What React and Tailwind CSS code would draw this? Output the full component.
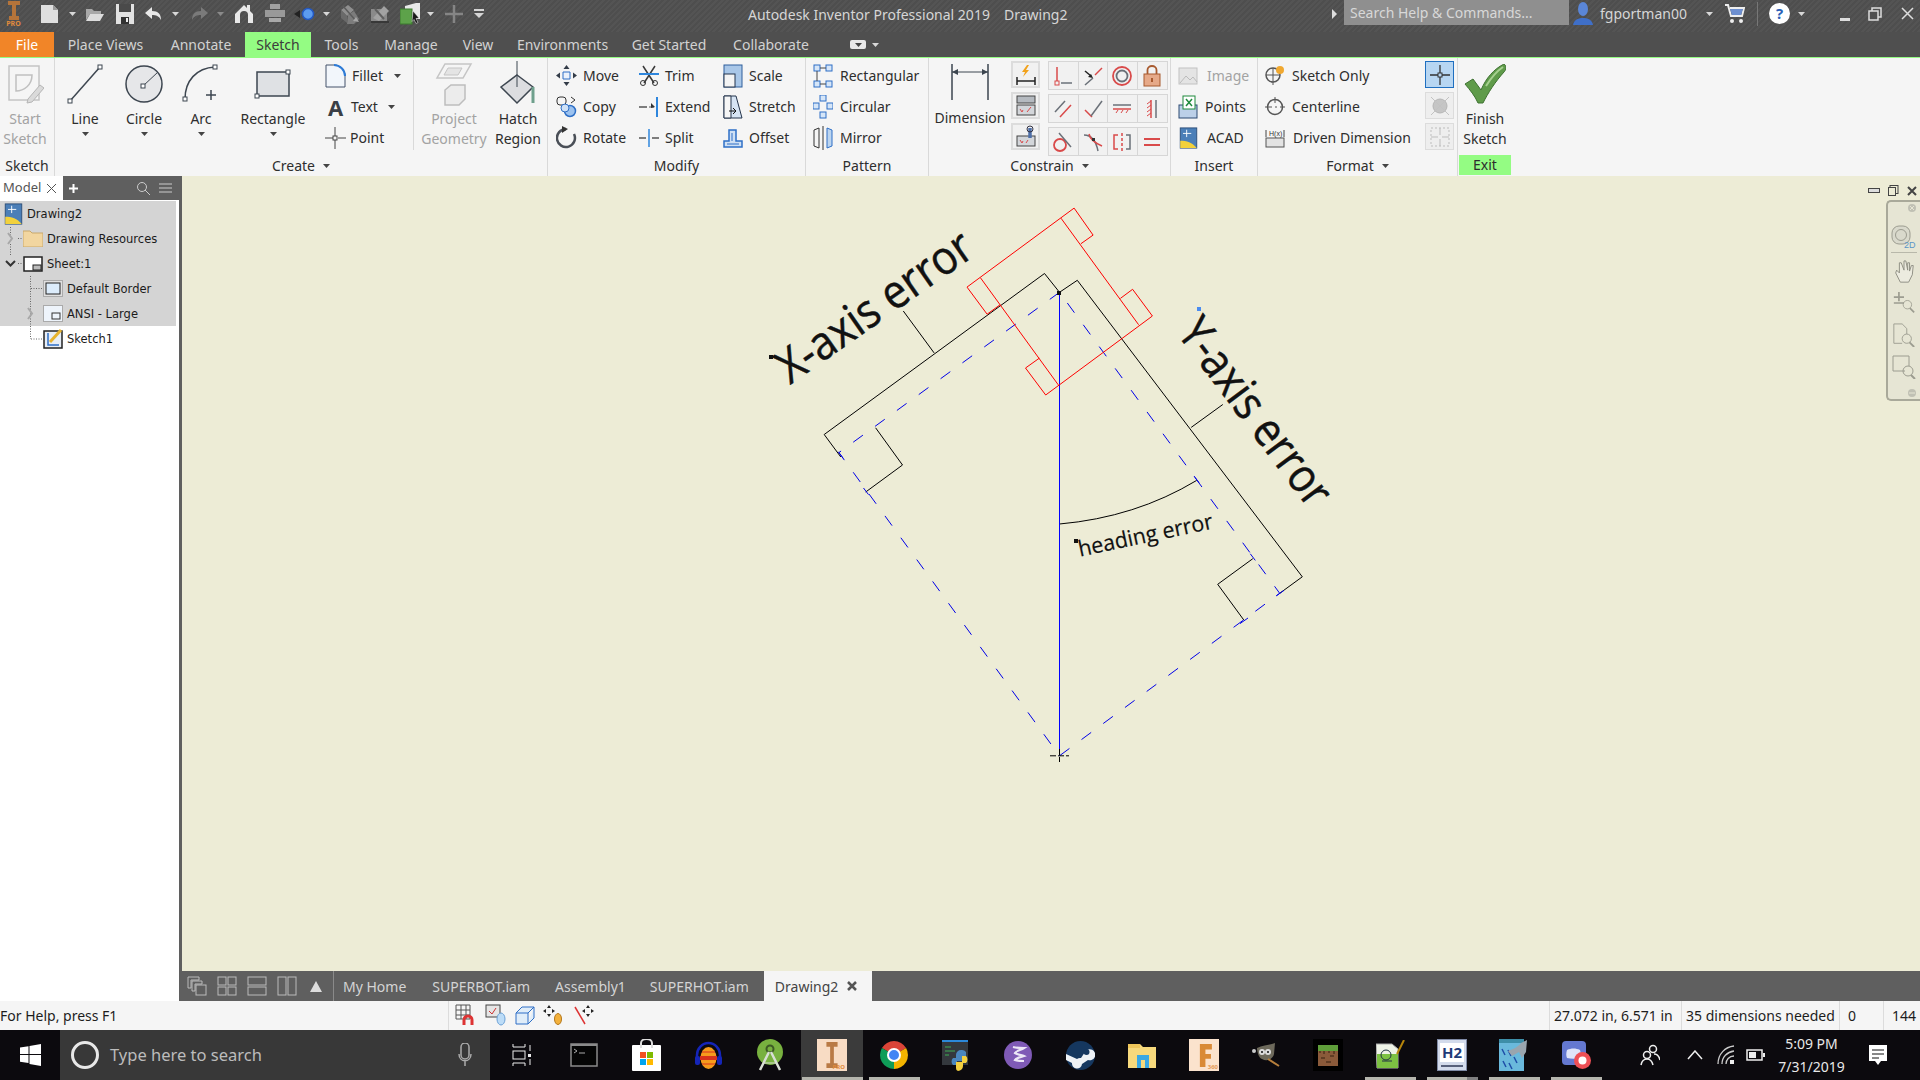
const Dd = ({ c = "#d8d8d8" }) => (
  <svg viewBox="0 0 7 4" className="w-[7px] h-[4px] shrink-0">
    <path d="M0 0h7L3.5 4z" fill={c} />
  </svg>
);

const S = ({ w, h, v, children, className = "" }) => (
  <svg viewBox={v} width={w} height={h} className={"shrink-0 " + className} fill="none">
    {children}
  </svg>
);

// ---- quick access icons
const AppIcon = () => (
  <div className="flex flex-col items-center w-[17px] leading-none">
    <S w={12} h={19} v="0 0 12 19"><path d="M0 0h12v4H8v11h3v4H1v-4h3V4H0z" fill="#b5743a" /></S>
    <span className="text-[7px] font-bold text-[#e08a3c] leading-[7px]">PRO</span>
  </div>
);
const NewDoc = () => <S w={19} h={20} v="0 0 19 20"><path d="M1 1h12l5 5v13H1z" fill="#dfdfdf" /><path d="M13 1v5h5z" fill="#9a9a9a" /></S>;
const OpenIco = () => <S w={19} h={16} v="0 0 19 16"><path d="M1 3h6l2 2h7v3H5L1 14z" fill="#a8a8a8" /><path d="M5 8h14l-4 7H1z" fill="#dcdcdc" /></S>;
const SaveIco = () => <S w={20} h={22} v="0 0 20 22"><rect x="1" y="1" width="18" height="20" fill="#e2e2e2" /><rect x="4" y="1" width="12" height="8" fill="#4a4a4a" /><rect x="6" y="14" width="8" height="7" fill="#333" /><rect x="11" y="15" width="2" height="4" fill="#eee" /></S>;
const Undo = ({ c = "#e8e8e8", flip }) => (
  <S w={18} h={14} v="0 0 18 14" className={flip ? "-scale-x-100" : ""}>
    <path d="M7 0L0 6l7 6V8c4 0 7 1 9 5 0-6-3-9-9-9z" fill={c} />
  </S>
);
const Home = () => <S w={18} h={20} v="0 0 18 20"><path d="M9 1l3 3V1h3v6l3 3v9h-5v-8a4 4 0 0 0-8 0v8H0v-9z" fill="#e8e8e8" /></S>;
const PrintIco = () => <S w={20} h={19} v="0 0 20 19"><rect x="5" y="0" width="10" height="5" fill="#a2a2a2" /><rect x="0" y="6" width="20" height="7" fill="#999" /><rect x="4" y="14" width="12" height="4" fill="#a8a8a8" /></S>;
const DotIco = () => <S w={21} h={14} v="0 0 21 14"><path d="M0 7l6-4v8z" fill="#222" /><circle cx="14" cy="7" r="5.500" fill="#5c9bf0" stroke="#2458c0" strokeWidth="1.500" /></S>;
const GrayA = () => <S w={20} h={22} v="0 0 20 22"><path d="M1 7l7-5 6 5-7 6z" fill="#8f8f8f" /><path d="M1 7v8l6 5v-7z" fill="#6a6a6a" /><path d="M8 12l6-4 5 8-5 5H7z" fill="#7c7c7c" /><path d="M3 3l14 16" stroke="#5c5c5c" strokeWidth="1.500" /><path d="M13 18l3-4 3 5z" fill="#a6a6a6" /></S>;
const GrayB = () => <S w={20} h={20} v="0 0 20 20"><rect x="1" y="5" width="16" height="13" fill="#8a8a8a" /><path d="M3 14L14 2l5 5-10 10z" fill="#a2a2a2" /><path d="M5 5l9 10" stroke="#5f5f5f" strokeWidth="2" /><path d="M1 18h18" stroke="#383838" strokeWidth="2" /></S>;
const GreenDoc = () => <S w={20} h={24} v="0 0 20 24"><path d="M5 4l11-3h4v16H5z" fill="#e9e9e9" /><rect x="0" y="7" width="12" height="15" fill="#5da24a" stroke="#3c7a2e" /><path d="M13 9l6 7-3 .5 2 4-2 1-2-4-2 2z" fill="#1a1a1a" stroke="#eee" strokeWidth=".5" /></S>;
const PlusGray = () => <S w={18} h={18} v="0 0 18 18"><path d="M9 0v18M0 9h18" stroke="#858585" strokeWidth="2.500" /></S>;
const QatMenu = () => <S w={10} h={10} v="0 0 10 10"><path d="M0 1h10" stroke="#d5d5d5" strokeWidth="2" /><path d="M0 4h10l-5 5z" fill="#d5d5d5" /></S>;
const UserIco = () => <S w={20} h={24} v="0 0 20 24"><ellipse cx="10" cy="7" rx="5" ry="7" fill="#5a86d8" /><path d="M0 23c1-6 6-7 10-7s9 1 10 7z" fill="#3f6fc8" /></S>;
const Cart = () => <S w={20} h={20} v="0 0 20 20"><path d="M0 1h3l3 11h11l2-8H5" stroke="#eee" strokeWidth="2" /><path d="M5 5h13l-2 6H7z" fill="#6d8fd0" /><circle cx="7" cy="17" r="2" fill="#eee" /><circle cx="16" cy="17" r="2" fill="#eee" /></S>;
const Help = () => (
  <div className="w-[21px] h-[21px] rounded-full bg-white flex items-center justify-center text-[15px] font-bold text-[#2a5fb8] leading-none">?</div>
);

// ---- ribbon icons
const n = "#3d4650";
const Handle = ({ x, y }) => <rect x={x - 2} y={y - 2} width="4" height="4" fill="#fff" stroke={n} />;

const StartSketch = () => (
  <S w={38} h={42} v="0 0 38 42">
    <rect x="3" y="3" width="30" height="34" stroke="#c4c4c4" strokeWidth="1.500" />
    <path d="M10 12v16c8 0 16-6 16-16z" stroke="#c0c0c0" strokeWidth="1.500" />
    <path d="M22 36l12-14 4 3-12 14-5 1z" fill="#dadada" stroke="#b5b5b5" />
  </S>
);
const LineIco = () => <S w={36} h={42} v="0 0 36 42"><path d="M3 38L33 4" stroke={n} strokeWidth="1.500" /><Handle x={3} y={38} /><Handle x={33} y={4} /></S>;
const CircleIco = () => (
  <S w={40} h={42} v="0 0 40 42">
    <circle cx="20" cy="21" r="18" fill="#e6e7e9" stroke={n} strokeWidth="1.500" />
    <path d="M19 23L34 9" stroke={n} /><Handle x={19} y={23} />
  </S>
);
const ArcIco = () => (
  <S w={38} h={42} v="0 0 38 42">
    <path d="M3 36C3 18 14 5 33 4" stroke={n} strokeWidth="1.500" /><Handle x={3} y={36} /><Handle x={33} y={4} />
    <path d="M29 27v10M24 32h10" stroke={n} strokeWidth="1.500" />
  </S>
);
const RectIco = () => (
  <S w={38} h={32} v="0 0 38 32">
    <rect x="3" y="4" width="32" height="24" fill="#dfe1e4" stroke={n} strokeWidth="1.500" /><Handle x={34} y={4} /><Handle x={3} y={28} />
  </S>
);
const ProjectIco = () => (
  <S w={38} h={44} v="0 0 38 44">
    <path d="M10 2h26l-8 14H2z" stroke="#c5c5c5" strokeWidth="1.500" /><path d="M13 6h14l-4 7H9z" fill="#e4e4e4" stroke="#c5c5c5" />
    <path d="M10 28l6-5h14v14l-6 6H10z" fill="#ececec" stroke="#bdbdbd" strokeWidth="1.500" />
  </S>
);
const HatchIco = () => (
  <S w={38} h={46} v="0 0 38 46">
    <path d="M18 14L34 26 18 42 2 26z" fill="#dcdde0" stroke={n} strokeWidth="1.500" />
    <path d="M18 0v26" stroke={n} /><path d="M34 26v16" stroke="#6fa08d" strokeWidth="3" />
  </S>
);
const Fillet = () => <S w={21} h={24} v="0 0 21 24"><path d="M1 1h8c6 0 11 5 11 11v11H1z" fill="#f2f6fb" stroke="#44536a" /><path d="M9 1c6 0 11 5 11 11" stroke="#2e7bd6" strokeWidth="2" /></S>;
const TextIco = () => <span className="w-[21px] text-center text-[22px] font-bold leading-none text-[#3a3f46]">A</span>;
const PointIco = () => <S w={21} h={22} v="0 0 21 22"><path d="M10 0v9M10 13v9M0 11h8M13 11h8" stroke="#444" /><rect x="8" y="9" width="4" height="4" stroke="#444" /></S>;
const Move = () => <S w={21} h={21} v="0 0 21 21"><path d="M10.500 0l3 4h-6zM10.500 21l3-4h-6zM0 10.500l4-3v6zM21 10.500l-4-3v6z" fill="#333c48" /><path d="M7 7h7v7H7z" fill="#eaf1fb" stroke="#2e6fc6" /></S>;
const Copy = () => <S w={21} h={23} v="0 0 21 23"><rect x="1" y="2" width="9" height="8" rx="3" stroke="#333" /><circle cx="14" cy="16" r="5.500" fill="#9cc2ef" stroke="#2e6fc6" strokeWidth="1.500" /><circle cx="9" cy="13" r="4" fill="#cfe1f7" stroke="#2e6fc6" /><path d="M15 2l4 3-4 3" stroke="#333" /></S>;
const Rotate = () => <S w={21} h={23} v="0 0 21 23"><path d="M10 3a9 9 0 1 0 8 5" stroke="#4a4f57" strokeWidth="2.500" /><path d="M6 0l6 3-6 4z" fill="#333" /></S>;
const Trim = () => <S w={20} h={21} v="0 0 20 21"><path d="M4 1l11 17M16 1L5 18" stroke="#3a3a3a" strokeWidth="1.500" /><circle cx="4" cy="18" r="2.500" stroke="#333" /><circle cx="16" cy="18" r="2.500" stroke="#333" /><path d="M0 9h20" stroke="#2e86dd" strokeWidth="2" /></S>;
const Extend = () => <S w={20} h={20} v="0 0 20 20"><path d="M0 10h8" stroke="#555" strokeWidth="1.500" /><path d="M10 10h5" stroke="#555" /><path d="M12 6l4 4-4 1z" fill="#333" /><path d="M18 0v20" stroke="#2e86dd" strokeWidth="2" /></S>;
const Split = () => <S w={20} h={20} v="0 0 20 20"><path d="M0 10h7M13 10h7" stroke="#555" strokeWidth="1.500" /><path d="M10 1v18" stroke="#2e86dd" strokeWidth="1.500" /></S>;
const Scale = () => <S w={20} h={24} v="0 0 20 24"><rect x="1" y="1" width="18" height="22" fill="#a9c7e8" stroke="#2e5f9c" /><rect x="1" y="10" width="11" height="13" fill="#f4f4f4" stroke="#25354c" /></S>;
const Stretch = () => <S w={20} h={24} v="0 0 20 24"><path d="M1 1h12l6 22H1z" fill="#d6e4f4" stroke="#25354c" /><path d="M1 1h7v22H1z" fill="#f6f6f6" stroke="#25354c" /><path d="M6 16h6M10 13l3 3-3 3" stroke="#111" /></S>;
const Offset = () => <S w={20} h={20} v="0 0 20 20"><path d="M1 19v-6h5V2h7v11h6v6z" fill="#cfe0f4" stroke="#2e6fc6" strokeWidth="1.500" /><path d="M4 16h12M9 5v8" stroke="#2e6fc6" /></S>;
const RectPat = () => <S w={20} h={24} v="0 0 20 24"><rect x="1" y="1" width="6" height="6" stroke="#2e6fc6" fill="#d6e6f8" /><rect x="13" y="1" width="6" height="6" stroke="#2e6fc6" fill="#d6e6f8" /><rect x="1" y="17" width="6" height="6" stroke="#2e6fc6" fill="#d6e6f8" /><rect x="13" y="17" width="6" height="6" stroke="#2e6fc6" fill="#d6e6f8" /><path d="M7 4h6M4 7v10M7 20h6" stroke="#444" /></S>;
const CircPat = () => <S w={20} h={24} v="0 0 20 24"><rect x="7" y="0" width="6" height="6" stroke="#2e6fc6" fill="#d6e6f8" /><rect x="0" y="8" width="6" height="6" stroke="#2e6fc6" fill="#d6e6f8" /><rect x="14" y="8" width="6" height="6" stroke="#2e6fc6" fill="#d6e6f8" /><rect x="7" y="17" width="6" height="6" stroke="#2e6fc6" fill="#d6e6f8" /></S>;
const Mirror = () => <S w={20} h={24} v="0 0 20 24"><path d="M1 4l5-2v20l-5-2z" stroke="#333" /><path d="M19 4l-5-2v20l5-2z" fill="#bcd5f0" stroke="#2e6fc6" /><path d="M10 0v24" stroke="#333" /></S>;
const DimIco = () => (
  <S w={38} h={36} v="0 0 38 36">
    <path d="M1 0v36M37 0v36" stroke={n} strokeWidth="1.500" />
    <path d="M1 8h36" stroke={n} /><path d="M1 8l6-3v6zM37 8l-6-3v6z" fill={n} />
  </S>
);

const r = "#d94a4a";
const g = "#6a7078";
const cells = [
  [<><path d="M5 2v14" stroke={r} strokeWidth="1.500" /><rect x="3" y="16" width="4" height="4" stroke={r} /><path d="M9 18h11" stroke={g} strokeWidth="1.500" /></>,
   <><path d="M3 20l8-7" stroke={g} strokeWidth="1.500" /><path d="M13 10l7-7" stroke={r} strokeWidth="1.500" /><path d="M3 6l6 5" stroke="#222" strokeWidth="1.500" /><path d="M11 13L6 12l3-3z" fill="#222" /></>,
   <><circle cx="11" cy="11" r="9" stroke={r} strokeWidth="1.800" /><circle cx="11" cy="11" r="5.500" stroke={g} strokeWidth="1.800" /></>,
   <><rect x="3" y="9" width="16" height="12" fill="#e6a988" stroke="#a85a2f" /><path d="M6.500 9V5a4.500 4 0 0 1 9 0v4" stroke="#a85a2f" strokeWidth="1.800" /><rect x="10" y="13" width="2" height="4" fill="#a85a2f" /></>],
  [<><path d="M3 14L13 3" stroke={g} strokeWidth="1.500" /><path d="M8 19L19 7" stroke={r} strokeWidth="1.500" /></>,
   <><path d="M3 12l7 7" stroke={r} strokeWidth="1.500" /><path d="M9 18L20 3" stroke={g} strokeWidth="1.500" /></>,
   <><path d="M2 7h18" stroke={g} strokeWidth="1.500" /><path d="M2 11h18" stroke={r} strokeWidth="1.500" /><path d="M5 15l2-3M10 15l2-3M15 15l2-3" stroke={r} /></>,
   <><path d="M10 2v18" stroke={r} strokeWidth="1.500" /><path d="M6 6l4-3M6 10l4-3M6 14l4-3M6 18l4-3" stroke={r} /><path d="M15 2v18" stroke={g} strokeWidth="1.500" /></>],
  [<><circle cx="8" cy="14" r="6" stroke={r} strokeWidth="1.800" /><path d="M7 2l12 14" stroke={g} strokeWidth="1.500" /></>,
   <><path d="M2 4c8 0 12 6 14 16" stroke={g} strokeWidth="1.500" /><path d="M7 3c1 5 6 9 13 12" stroke={r} strokeWidth="1.500" /><rect x="10" y="7" width="3" height="3" fill="#333" /></>,
   <><path d="M7 4H3v14h4" stroke={r} strokeWidth="1.500" /><path d="M15 4h4v14h-4" stroke={g} strokeWidth="1.500" /><path d="M11 2v18" stroke={r} strokeWidth="1.500" strokeDasharray="3 2" /></>,
   <path d="M3 8h16M3 14h16" stroke={r} strokeWidth="1.800" />],
];
const sideIcons = [
  <><path d="M3 18h18" stroke="#222" strokeWidth="1.500" /><path d="M3 14v8M21 14v8" stroke="#222" strokeWidth="1.500" /><path d="M13 2l-5 7h3l-2 5 6-7h-3l3-5z" fill="#f2a21b" /></>,
  <><rect x="3" y="2" width="18" height="7" fill="#b5bac0" stroke="#444" /><rect x="3" y="11" width="18" height="10" fill="#d3d6da" stroke="#444" /><path d="M6 15l2 3 1-2M13 18l4-5" stroke={r} /></>,
  <><rect x="3" y="11" width="18" height="10" fill="#d3d6da" stroke="#444" /><path d="M16 3v10" stroke="#4e6fa8" strokeWidth="3.500" /><circle cx="16" cy="4" r="3" stroke="#334" /><path d="M6 15l2 3 1-2M12 18l2-3" stroke={r} /></>,
];
const Cell = ({ children }) => (
  <div className="w-[29.500px] h-[27px] flex items-center justify-center">
    <svg viewBox="0 0 22 22" width="22" height="22" fill="none">{children}</svg>
  </div>
);

const ImageIco = () => <S w={20} h={20} v="0 0 20 20"><rect x="1" y="2" width="18" height="16" fill="#e4e4e4" stroke="#c2c2c2" /><path d="M2 17l6-7 4 4 3-3 4 5" stroke="#bbb" /></S>;
const PointsIco = () => <S w={20} h={24} v="0 0 20 24"><rect x="1" y="10" width="18" height="13" fill="#bcd0e8" stroke="#2d4a73" /><rect x="5" y="1" width="12" height="13" fill="#fff" stroke="#1f8a3c" /><path d="M8 4l6 7M14 4l-6 7" stroke="#1f8a3c" strokeWidth="1.500" /></S>;
const AcadIco = () => (
  <S w={19} h={22} v="0 0 20 24">
    <rect x="1" y="1" width="18" height="22" fill="#4b7fb8" stroke="#2c4e78" />
    <path d="M1 23v-8c7 0 13 2 18 8z" fill="#f2d13c" />
    <path d="M4 7h9M8 3v8" stroke="#fff" />
  </S>
);
const SketchOnly = () => <S w={20} h={22} v="0 0 20 22"><circle cx="8" cy="10" r="7" stroke="#555" strokeWidth="1.500" /><path d="M1 10h14M8 3v17" stroke="#555" /><circle cx="15" cy="5" r="4" fill="#f0a830" /></S>;
const CenterIco = () => <S w={20} h={20} v="0 0 20 20"><circle cx="10" cy="10" r="7.500" stroke="#555" strokeWidth="1.500" /><path d="M0 10h7M10 10h2M15 10h5M10 0v6" stroke="#555" /></S>;
const DrivenIco = () => <S w={20} h={20} v="0 0 20 20"><rect x="1" y="10" width="18" height="9" fill="#e3e3e3" stroke="#555" /><path d="M1 2v7M19 2v7" stroke="#444" /><text x="4" y="8" fontSize="7" fontFamily="Liberation Sans" fill="#333">H(x)</text></S>;
const PlusCross = ({ c = "#333" }) => <svg viewBox="0 0 24 24" width="24" height="24" fill="none"><path d="M12 2v8M12 14v8M2 12h8M14 12h8" stroke={c} strokeWidth="1.300" /><rect x="10" y="10" width="4" height="4" stroke={c} /></svg>;
const Check = () => <S w={42} h={40} v="0 0 42 40"><path d="M1 20l8-5 8 11C22 14 30 5 40 0c3 2 2 6 0 8C31 18 24 29 19 39h-5C11 32 6 26 1 20z" fill="#5f9b4a" stroke="#3f7232" /><path d="M22 22C27 14 33 7 39 3" stroke="#a6d08f" strokeWidth="2" /></S>;

const Tool = ({ icon, label, dd, off, iw = "w-[21px]", gap = "ml-[6px]" }) => (
  <div className={"flex items-center h-[31px] " + (off ? "text-[#a3a3a3]" : "text-[#2e2e2e]")}>
    <div className={"flex justify-center shrink-0 " + iw}>{icon}</div>
    <span className={"whitespace-nowrap " + gap}>{label}</span>
    {dd}
  </div>
);

const Big = ({ w, icon, l1, l2, arrow, off }) => (
  <div className={"flex flex-col items-center shrink-0 " + w + " " + (off ? "text-[#a3a3a3]" : "text-[#2e2e2e]")}>
    <div className="h-[51px] flex items-center justify-center">{icon}</div>
    <span className="leading-[20px] whitespace-nowrap">{l1}</span>
    {l2 && <span className="leading-[20px] whitespace-nowrap">{l2}</span>}
    {arrow && <div className="mt-[3px]"><Dd c="#444" /></div>}
  </div>
);

const PanelLabel = ({ children, arrow }) => (
  <div className="h-[21px] flex items-center justify-center gap-[8px] text-[#2e2e2e]">
    <span>{children}</span>
    {arrow && <Dd c="#444" />}
  </div>
);

const Ribbon = () => (
  <div className="h-[118px] bg-[#f5f5f5] flex text-[14px] leading-[20px]">
    <div className="w-[55px] border-r border-[#d9d9d9] flex flex-col shrink-0">
      <div className="h-[97px]"><Big w="w-[50px]" off icon={<StartSketch />} l1="Start" l2="Sketch" /></div>
      <PanelLabel>Sketch</PanelLabel>
    </div>

    <div className="w-[493px] border-r border-[#d9d9d9] flex flex-col shrink-0">
      <div className="h-[97px] flex">
        <Big w="w-[60px]" icon={<LineIco />} l1="Line" arrow />
        <Big w="w-[58px]" icon={<CircleIco />} l1="Circle" arrow />
        <Big w="w-[56px]" icon={<ArcIco />} l1="Arc" arrow />
        <Big w="w-[88px]" icon={<RectIco />} l1="Rectangle" arrow />
        <div className="pt-[2px] w-[88px] ml-[8px] shrink-0">
          <Tool icon={<Fillet />} label="Fillet" dd={<div className="ml-[11px]"><Dd c="#444" /></div>} />
          <Tool gap="ml-[5px]" icon={<TextIco />} label="Text" dd={<div className="ml-[10px]"><Dd c="#444" /></div>} />
          <Tool gap="ml-[4px]" icon={<PointIco />} label="Point" />
        </div>
        <div className="w-px h-[90px] bg-[#d9d9d9] mt-[2px] shrink-0" />
        <Big w="w-[72px] ml-[4px]" off icon={<ProjectIco />} l1="Project" l2="Geometry" />
        <Big w="w-[54px] ml-[1px]" icon={<HatchIco />} l1="Hatch" l2="Region" />
      </div>
      <PanelLabel arrow>Create</PanelLabel>
    </div>

    <div className="w-[258px] border-r border-[#d9d9d9] flex flex-col shrink-0">
      <div className="h-[97px] flex pt-[2px] pl-[8px]">
        <div className="w-[83px] shrink-0">
          <Tool icon={<Move />} label="Move" />
          <Tool icon={<Copy />} label="Copy" />
          <Tool icon={<Rotate />} label="Rotate" />
        </div>
        <div className="w-[84px] shrink-0">
          <Tool iw="w-[20px]" icon={<Trim />} label="Trim" />
          <Tool iw="w-[20px]" icon={<Extend />} label="Extend" />
          <Tool iw="w-[20px]" icon={<Split />} label="Split" />
        </div>
        <div className="shrink-0">
          <Tool iw="w-[20px]" icon={<Scale />} label="Scale" />
          <Tool iw="w-[20px]" icon={<Stretch />} label="Stretch" />
          <Tool iw="w-[20px]" icon={<Offset />} label="Offset" />
        </div>
      </div>
      <PanelLabel>Modify</PanelLabel>
    </div>

    <div className="w-[123px] border-r border-[#d9d9d9] flex flex-col shrink-0">
      <div className="h-[97px] pt-[2px] pl-[7px]">
        <Tool iw="w-[20px]" gap="ml-[7px]" icon={<RectPat />} label="Rectangular" />
        <Tool iw="w-[20px]" gap="ml-[7px]" icon={<CircPat />} label="Circular" />
        <Tool iw="w-[20px]" gap="ml-[7px]" icon={<Mirror />} label="Mirror" />
      </div>
      <PanelLabel>Pattern</PanelLabel>
    </div>

    <div className="w-[242px] border-r border-[#d9d9d9] flex flex-col shrink-0">
      <div className="h-[97px] flex">
        <div className="w-[82px] shrink-0 flex flex-col items-center pt-[6px] text-[#2e2e2e]">
          <DimIco />
          <span className="mt-[8px] leading-[20px]">Dimension</span>
        </div>
        <div className="flex flex-col gap-[4px] pt-[3px] shrink-0">
          {sideIcons.map((ic, i) => (
            <div key={i} className="border-2 border-[#dcdcdc] bg-[#f1f1f1] w-[29px] h-[27px] flex items-center justify-center">
              <svg viewBox="0 0 24 24" width="24" height="24" fill="none">{ic}</svg>
            </div>
          ))}
        </div>
        <div className="flex flex-col gap-[4px] pt-[3px] ml-[8px] shrink-0">
          {cells.map((row, i) => (
            <div key={i} className="flex border border-[#d6d6d6] bg-[#f1f1f1] divide-x divide-[#d6d6d6] w-fit">
              {row.map((c, j) => <Cell key={j}>{c}</Cell>)}
            </div>
          ))}
        </div>
      </div>
      <PanelLabel arrow>Constrain</PanelLabel>
    </div>

    <div className="w-[87px] border-r border-[#d9d9d9] flex flex-col shrink-0">
      <div className="h-[97px] pt-[2px] pl-[7px]">
        <Tool iw="w-[20px]" gap="ml-[9px]" off icon={<ImageIco />} label="Image" />
        <Tool iw="w-[20px]" gap="ml-[7px]" icon={<PointsIco />} label="Points" />
        <Tool iw="w-[20px]" gap="ml-[9px]" icon={<AcadIco />} label="ACAD" />
      </div>
      <PanelLabel>Insert</PanelLabel>
    </div>

    <div className="w-[200px] border-r border-[#d9d9d9] flex flex-col shrink-0">
      <div className="h-[97px] flex pt-[3px] pl-[7px]">
        <div className="w-[160px] shrink-0 -mt-[1px]">
          <Tool iw="w-[20px]" gap="ml-[7px]" icon={<SketchOnly />} label="Sketch Only" />
          <Tool iw="w-[20px]" gap="ml-[7px]" icon={<CenterIco />} label="Centerline" />
          <Tool iw="w-[20px]" gap="ml-[8px]" icon={<DrivenIco />} label="Driven Dimension" />
        </div>
        <div className="flex flex-col gap-[4px] shrink-0">
          <div className="w-[29px] h-[27px] border border-[#1f6fc0] bg-[#b7d6f2] flex items-center justify-center"><PlusCross /></div>
          <div className="w-[29px] h-[27px] border border-[#dcdcdc] bg-[#eeeeee] flex items-center justify-center">
            <svg viewBox="0 0 24 24" width="24" height="24" fill="none"><circle cx="12" cy="12" r="7" fill="#c5c5c5" stroke="#b5b5b5" /><path d="M3 3l18 18M21 3L3 21" stroke="#c2c2c2" /></svg>
          </div>
          <div className="w-[29px] h-[27px] border border-[#dcdcdc] bg-[#eeeeee] flex items-center justify-center">
            <svg viewBox="0 0 24 24" width="24" height="24" fill="none"><rect x="3" y="3" width="18" height="18" stroke="#bdbdbd" strokeDasharray="2 2" /><path d="M12 3v7M12 14v7M3 12h7M14 12h7" stroke="#bdbdbd" /></svg>
          </div>
        </div>
      </div>
      <PanelLabel arrow>Format</PanelLabel>
    </div>

    <div className="w-[54px] flex flex-col shrink-0">
      <div className="h-[97px]"><Big w="w-[54px]" icon={<Check />} l1="Finish" l2="Sketch" /></div>
      <div className="h-[20px] w-[52px] ml-[1px] bg-[#94fc83] flex items-center justify-center text-[#2e2e2e]">Exit</div>
    </div>
  </div>
);

const tabs = [
  ["Place Views", "w-[103px]"], ["Annotate", "w-[88px]"], ["Sketch", "w-[66px]"], ["Tools", "w-[61px]"], ["Manage", "w-[78px]"],
  ["View", "w-[56px]"], ["Environments", "w-[113px]"], ["Get Started", "w-[100px]"], ["Collaborate", "w-[104px]"],
];

const TreeRow = ({ pad, icon, label }) => (
  <div className={"h-[25px] flex items-center " + pad}>
    <div className="w-[20px] h-[20px] flex items-center justify-center shrink-0">{icon}</div>
    <span className="ml-[4px] mt-[2px] whitespace-nowrap">{label}</span>
  </div>
);

const Browser = () => (
  <div className="w-[179px] shrink-0 flex flex-col bg-white">
    <div className="h-[24px] flex bg-[#5f5f5f] text-[13px] text-[#555]">
      <div className="w-[63px] bg-white flex items-center pl-[3px] gap-[6px]">
        <span>Model</span>
        <S w={9} h={9} v="0 0 9 9"><path d="M0 0l9 9M9 0L0 9" stroke="#555" /></S>
      </div>
      <div className="flex-1 flex items-center text-white">
        <S w={9} h={9} v="0 0 9 9" className="ml-[6px]"><path d="M4.500 0v9M0 4.500h9" stroke="#fff" strokeWidth="2" /></S>
        <S w={14} h={14} v="0 0 14 14" className="ml-[58px]"><circle cx="6" cy="6" r="4.500" stroke="#ccc" /><path d="M9 9l5 5" stroke="#ccc" /></S>
        <S w={13} h={10} v="0 0 13 10" className="ml-[9px]"><path d="M0 1h13M0 5h13M0 9h13" stroke="#ccc" /></S>
      </div>
    </div>
    <div className="relative flex-1 pt-[1px] text-[11.500px] text-[#1b1b1b] font-['DejaVu_Sans',sans-serif]">
      <div className="w-[176px] bg-[#d4d4d4]">
        <TreeRow pad="pl-[3px]" icon={<AcadIco />} label="Drawing2" />
        <TreeRow pad="pl-[23px]" icon={<S w={20} h={17} v="0 0 20 17"><path d="M0 1h7l2 2h11v14H0z" fill="#f2d6a0" stroke="#c9a86a" /></S>} label="Drawing Resources" />
        <TreeRow pad="pl-[23px]" icon={<S w={20} h={16} v="0 0 20 16"><rect x="1" y="1" width="18" height="14" fill="#fff" stroke="#222" strokeWidth="1.500" /><rect x="10" y="9" width="8" height="5" fill="#bbb" stroke="#222" /></S>} label="Sheet:1" />
        <TreeRow pad="pl-[43px]" icon={<S w={20} h={17} v="0 0 20 17"><rect x="0.500" y="0.500" width="19" height="16" fill="#e0e0e0" stroke="#aaa" /><rect x="3" y="3" width="14" height="11" fill="#dcecfb" stroke="#222" /></S>} label="Default Border" />
        <TreeRow pad="pl-[43px]" icon={<S w={20} h={17} v="0 0 20 17"><rect x="0.500" y="0.500" width="19" height="16" fill="#eef4fb" stroke="#aaa" /><rect x="9" y="8" width="8" height="6" stroke="#333" /></S>} label="ANSI - Large" />
      </div>
      <TreeRow pad="pl-[43px]" icon={<S w={20} h={20} v="0 0 20 20"><rect x="1" y="2" width="18" height="17" fill="#e8eef6" stroke="#222" strokeWidth="1.500" /><path d="M5 4v12h11" stroke="#2e6fc6" strokeWidth="1.500" /><path d="M7 13L18 1" stroke="#e7b32e" strokeWidth="3" /></S>} label="Sketch1" />
      {/* dotted tree connectors and expanders */}
      <svg className="absolute left-0 top-0 pointer-events-none" width="60" height="180" fill="none">
        <path d="M10.500 27v8M10.500 44v12M30.500 76v63M31 88.500h12M31 139h12M18 38.500h4M18 63.500h4" stroke="#666" strokeDasharray="1 1.500" />
        <path d="M8 33l4 5.500-4 5.500" stroke="#a8a8a8" strokeWidth="2" />
        <path d="M6 61l4.500 4.500 4.500-4.500" stroke="#333" strokeWidth="2" />
        <path d="M28 108l4 5.500-4 5.500" stroke="#a8a8a8" strokeWidth="2" />
      </svg>
    </div>
  </div>
);

const Canvas = () => (
  <div className="relative flex-1 bg-[#edecd6] overflow-hidden">
    <svg className="absolute inset-0" width="1738" height="795" viewBox="182 176 1738 795" fill="none">
      <g stroke="#000" strokeWidth="1">
        <path d="M1059.500 292.300L1044.500 273.500L824.200 434.500L840.800 457" />
        <path d="M875.600 427.800L902.500 465L865.700 492" />
        <path d="M1059.500 292.300L1077.300 280.300L1302.300 576.800L1279.700 593.300" />
        <path d="M1252.800 558.700L1217.700 584.300L1243.800 620" />
        <path d="M1059.500 524Q1135.400 517.300 1196.700 480.400" />
        <path d="M903.300 311L934.100 352.900M1191.200 427.400L1222.800 404.500" />
      </g>
      <path d="M1059.500 292.300L838.900 452.600L1059.500 755.800L1279.700 593.300Z" stroke="#0000e8" strokeDasharray="12 15" />
      <path d="M838.300 451.800l5 6.600M863.500 488l5 6.600M1194 476l5 6.600M1250.300 553.800l5 6.600M1240 623.600l8-5.600M1276 596l8-5.600" stroke="#0000e8" />
      <path d="M1059.500 292.300V755.800" stroke="#0000ff" strokeWidth="1" />
      <path d="M1059.500 749v13M1050 755.800h19" stroke="#000" strokeDasharray="6 2" />
      <g stroke="#f00" strokeWidth="1">
        <path d="M967 287.100L1074.100 208.100L1093.100 235.100L1080.800 243.800" />
        <path d="M1061 218.200L1138.600 324.700" />
        <path d="M1120.400 298.400L1132.600 289.300L1152.400 316L1045.700 395L1025.500 368L1039.300 358.200" />
        <path d="M980.400 277.700L1058.300 384.900" />
        <path d="M967 287.100L987.100 314.200L1000.200 304.700" />
      </g>
      <g fontFamily="'Open Sans', sans-serif" fill="#111" stroke="#111" strokeWidth="0.500">
        <text transform="translate(790 385) rotate(-35)" fontSize="47" textLength="228" lengthAdjust="spacingAndGlyphs">X-axis error</text>
        <text transform="translate(1176 333) rotate(53)" fontSize="47" textLength="222" lengthAdjust="spacingAndGlyphs">Y-axis error</text>
        <text transform="translate(1080 556.800) rotate(-12)" fontSize="22" textLength="137" lengthAdjust="spacingAndGlyphs" strokeWidth="0.200">heading error</text>
      </g>
      <rect x="769" y="355" width="4" height="4" fill="#111" />
      <rect x="1074" y="539" width="4" height="4" fill="#111" />
      <rect x="1197" y="307" width="4" height="4" fill="#4a8cf0" />
      <rect x="1057" y="291" width="4" height="4" fill="#111" />
    </svg>

    {/* document window controls */}
    <div className="absolute right-[3px] top-[9px] flex items-center gap-[8px]">
      <S w={12} h={5} v="0 0 12 5"><rect x="0.500" y="0.500" width="11" height="4" fill="#ddd" stroke="#444" /></S>
      <S w={11} h={11} v="0 0 11 11"><rect x="2" y="0.500" width="8" height="8" stroke="#444" /><rect x="0.500" y="2.500" width="7" height="8" fill="#edecd6" stroke="#444" /></S>
      <S w={10} h={10} v="0 0 10 10"><path d="M1 1l8 8M9 1l-8 8" stroke="#444" strokeWidth="2" /></S>
    </div>

    {/* navigation bar */}
    <div className="absolute right-0 top-[24px] w-[34px] h-[201px] bg-[#e6e5d4] border-2 border-r-0 border-[#a9a99a] rounded-l-[5px] flex flex-col items-center">
      <S w={8} h={8} v="0 0 8 8" className="mt-[2px] ml-[16px]"><circle cx="4" cy="4" r="4" fill="#c0c0b4" /><path d="M2 2l4 4M6 2L2 6" stroke="#e6e5d4" /></S>
      <S w={26} h={24} v="0 0 26 24" className="mt-[13px]">
        <rect x="1" y="1" width="18" height="18" rx="7" fill="#d9d9cc" stroke="#9c9c90" /><circle cx="10" cy="10" r="5.500" stroke="#9c9c90" />
        <text x="13" y="23" fontSize="9" fontFamily="Liberation Sans" fill="#5b95c8">2D</text>
      </S>
      <div className="w-[26px] h-px bg-[#b8b8aa] mt-[3px] shrink-0" />
      <S w={24} h={24} v="0 0 24 26" className="mt-[7px]"><path d="M3 14l5 10h9l4-8 1-10-2 0-2 6V3h-2v8L14 1h-2v10L9 3H7v11L4 11z" fill="#ecebdf" stroke="#8b8b80" /></S>
      <S w={24} h={22} v="0 0 24 26" className="mt-[8px]"><path d="M6 0v11M0 6h12M0 13h12" stroke="#9c9c90" strokeWidth="2" /><circle cx="16" cy="15" r="5" stroke="#9c9c90" /><path d="M19 19l5 5" stroke="#9c9c90" strokeWidth="2" /></S>
      <S w={24} h={24} v="0 0 24 26" className="mt-[9px]"><path d="M1 1h9l5 5v6M1 1v21h9" stroke="#9c9c90" /><circle cx="15" cy="17" r="5" stroke="#9c9c90" /><path d="M18 21l5 5" stroke="#9c9c90" strokeWidth="2" /></S>
      <S w={24} h={24} v="0 0 24 24" className="mt-[8px]"><path d="M13 16H1V1h16v10" stroke="#9c9c90" /><circle cx="16" cy="16" r="5" stroke="#9c9c90" /><path d="M19 20l4 4" stroke="#9c9c90" strokeWidth="2" /></S>
      <S w={8} h={8} v="0 0 8 8" className="mt-[10px] ml-[16px]"><circle cx="4" cy="4" r="4" fill="#c0c0b4" /><path d="M1 4h6" stroke="#e6e5d4" /></S>
    </div>
  </div>
);

const DocBar = () => (
  <div className="h-[30px] bg-[#5f5f5f] flex items-center text-[14px] text-[#d4d4d4] shrink-0">
    <S w={20} h={20} v="0 0 20 20" className="ml-[5px]"><path d="M1 1h11v3H4v8H1zM5 5h10v3H8v7H5z" stroke="#bbb" /><rect x="9" y="9" width="10" height="10" stroke="#bbb" /></S>
    <S w={20} h={20} v="0 0 20 20" className="ml-[10px]"><rect x="1" y="1" width="8" height="8" stroke="#bbb" /><rect x="11" y="1" width="8" height="8" stroke="#bbb" /><rect x="1" y="11" width="8" height="8" stroke="#bbb" /><rect x="11" y="11" width="8" height="8" stroke="#bbb" /></S>
    <S w={20} h={20} v="0 0 20 20" className="ml-[10px]"><rect x="1" y="1" width="18" height="8" stroke="#bbb" /><rect x="1" y="11" width="18" height="8" stroke="#bbb" /></S>
    <S w={20} h={20} v="0 0 20 20" className="ml-[10px]"><rect x="1" y="1" width="8" height="18" stroke="#bbb" /><rect x="11" y="1" width="8" height="18" stroke="#bbb" /></S>
    <S w={12} h={11} v="0 0 12 11" className="ml-[13px]"><path d="M6 0l6 11H0z" fill="#ddd" /></S>
    <div className="w-px h-[30px] bg-[#8a8a8a] ml-[11px]" />
    <span className="ml-[9px]">My Home</span>
    <span className="ml-[26px]">SUPERBOT.iam</span>
    <span className="ml-[25px]">Assembly1</span>
    <span className="ml-[24px]">SUPERHOT.iam</span>
    <div className="ml-[15px] h-[30px] bg-[#f5f5f5] text-[#444] flex items-center pl-[11px] gap-[9px] w-[108px]">
      <span>Drawing2</span>
      <S w={10} h={10} v="0 0 10 10"><path d="M1 1l8 8M9 1l-8 8" stroke="#555" strokeWidth="2.500" /></S>
    </div>
  </div>
);

const StatusBar = () => (
  <div className="h-[29px] bg-[#f5f5f5] flex items-stretch text-[14px] text-[#1d1d1d] shrink-0">
    <div className="w-[448px] flex items-center">For Help, press F1</div>
    <div className="flex-1 border-l border-[#dcdcdc] flex items-center pl-[6px] gap-[8px] pb-[2px]">
      <S w={22} h={22} v="0 0 22 22"><path d="M1 1h14v14H1zM1 6h14M1 11h14M6 1v14M11 1v14" stroke="#555" /><path d="M9 21v-5a4 4 0 0 1 8 0v5" stroke="#d33" strokeWidth="3" /></S>
      <S w={22} h={22} v="0 0 22 22"><rect x="1" y="1" width="14" height="12" fill="#e5e5e5" stroke="#444" /><path d="M4 7l3 3 4-6" stroke="#c33" /><ellipse cx="16" cy="15" rx="4" ry="6" fill="#bcdcf7" stroke="#6aa0d6" /></S>
      <S w={20} h={22} v="0 0 20 22"><path d="M1 9l6-6h12L13 9zM1 9v11h12V9M13 20l6-6V3" fill="#e0edf9" stroke="#2e6fc6" /></S>
      <S w={22} h={22} v="0 0 22 22"><path d="M6 1l2 3H4zM6 13l2-3H4zM0 7l3-2v4zM12 7L9 5v4z" fill="#222" /><ellipse cx="15" cy="15" rx="3.500" ry="5.500" fill="#f3b13c" stroke="#b4781c" /></S>
      <S w={24} h={22} v="0 0 24 22"><path d="M2 3l10 17" stroke="#d33" strokeWidth="1.500" /><path d="M15 1l2 3h-4zM15 13l2-3h-4zM9 7l3-2v4zM21 7l-3-2v4z" fill="#222" /></S>
    </div>
    <div className="w-[132px] border-l border-[#dcdcdc] flex items-center pl-[4px] whitespace-nowrap">27.072 in, 6.571 in</div>
    <div className="w-[158px] border-l border-[#dcdcdc] flex items-center pl-[4px] whitespace-nowrap">35 dimensions needed</div>
    <div className="w-[44px] border-l border-[#dcdcdc] flex items-center pl-[8px]">0</div>
    <div className="w-[37px] border-l border-[#dcdcdc] flex items-center pl-[8px]">144</div>
  </div>
);

const taskIcons = [
  <S w={20} h={22} v="0 0 20 22"><path d="M1 0v3h12V0M1 22v-3h12v3" stroke="#eee" /><rect x="1" y="7" width="12" height="8" stroke="#eee" /><path d="M18 1v6M18 15v6" stroke="#eee" /><rect x="16" y="10" width="3" height="3" fill="#eee" /></S>,
  <S w={28} h={24} v="0 0 28 24"><rect x="1" y="1" width="26" height="22" fill="#050505" stroke="#8a8a8a" strokeWidth="1.500" /><rect x="1" y="1" width="26" height="2" fill="#8a8a8a" /><path d="M4 6l3 2-3 2M9 10h6" stroke="#aaa" /></S>,
  <S w={29} h={32} v="0 0 29 32"><rect x="0" y="6" width="29" height="26" rx="1" fill="#fff" /><path d="M9 9V4a5.500 4 0 0 1 11 0v5" stroke="#ddd" strokeWidth="2" /><rect x="8" y="13" width="6" height="6" fill="#f25022" /><rect x="15" y="13" width="6" height="6" fill="#7fba00" /><rect x="8" y="20" width="6" height="6" fill="#00a4ef" /><rect x="15" y="20" width="6" height="6" fill="#ffb900" /></S>,
  <S w={27} h={28} v="0 0 27 28"><path d="M2 20V14a11.500 12 0 0 1 23 0v6" stroke="#1525b8" strokeWidth="2.500" /><rect x="0" y="15" width="5" height="9" rx="2" fill="#1525b8" /><rect x="22" y="15" width="5" height="9" rx="2" fill="#1525b8" /><ellipse cx="13.500" cy="17" rx="8" ry="11" fill="#f59b1c" /><path d="M5 17h17" stroke="#d8321c" strokeWidth="4" /><path d="M7 11h13M7 23h13" stroke="#e2551c" strokeWidth="1.500" /></S>,
  <S w={26} h={32} v="0 0 26 32"><circle cx="13" cy="13" r="13" fill="#78b13f" /><circle cx="13" cy="10" r="3.500" stroke="#3d5a25" strokeWidth="2" /><path d="M12 13L3 31M14 13l9 18" stroke="#d8dfd4" strokeWidth="2.500" /><path d="M6 24h14" stroke="#d8dfd4" /></S>,
  <div className="w-[30px] h-[32px] bg-[#f8dcc4] flex flex-col items-center justify-center relative">
    <S w={14} h={26} v="0 0 14 28"><path d="M1 0h12v5H9v18h4v5H1v-5h4V5H1z" fill="#b97a45" /></S>
    <span className="absolute right-[2px] bottom-[1px] text-[6px] font-bold leading-none text-[#e08a3c]">PRO</span>
  </div>,
  <S w={28} h={28} v="0 0 28 28"><path d="M14 14L1.900 7A14 14 0 0 1 26.100 7z" fill="#db4437" /><path d="M14 14L14 28A14 14 0 0 1 1.900 7z" fill="#0f9d58" /><path d="M14 14L26.100 7A14 14 0 0 1 14 28z" fill="#f4b400" /><circle cx="14" cy="14" r="6" fill="#4285f4" stroke="#fff" strokeWidth="2" /></S>,
  <S w={29} h={31} v="0 0 29 31"><rect x="0" y="0" width="26" height="25" fill="#34383d" /><rect x="0" y="0" width="26" height="2" fill="#2c88d9" /><path d="M3 7h6M3 11h10M3 15h4" stroke="#3fae55" /><path d="M19 10a5 5 0 0 0-5 5v3h-3a5 5 0 0 0 0 7h8v-3h-4v-1h6a3 3 0 0 0 3-3v-6a5 5 0 0 0-5-2z" fill="#4a86bd" /><path d="M16 31a5 5 0 0 0 5-5v-3h3a5 5 0 0 0 0-7h-4v6h-6v6a3 3 0 0 0 2 3z" fill="#f4d03f" /></S>,
  <S w={28} h={28} v="0 0 28 28"><circle cx="14" cy="14" r="14" fill="#7f5ab6" /><path d="M9 6c4 1 8 1 11 1-3 2-8 3-9 5 3 2 7 2 9 3-3 1-8 2-9 4 3 1 6 1 9 1" stroke="#ece6f6" strokeWidth="2.200" /></S>,
  <S w={29} h={29} v="0 0 29 29"><circle cx="14.500" cy="14.500" r="14.500" fill="#15375f" /><path d="M0 13l11 5a5 5 0 0 1 4-1l4-6a5.500 5.500 0 1 1 3 8l-6 4a5 5 0 0 1-10-1l-6-3z" fill="#eef2f6" /><circle cx="20.500" cy="11" r="3" fill="#15375f" /></S>,
  <S w={28} h={25} v="0 0 28 25"><path d="M0 1h12l3 3h13v21H0z" fill="#f7d97c" /><rect x="0" y="1" width="12" height="4" fill="#efc65a" /><path d="M9 25V12h12v13h-4v-8h-4v8z" fill="#3aa8e4" /></S>,
  <div className="w-[30px] h-[32px] bg-[#fbe3cd] flex items-center justify-center relative">
    <S w={15} h={24} v="0 0 16 26"><path d="M3 1h13v6H9v5h6v5H9v9H3z" fill="#d98a36" /></S>
    <span className="absolute right-[1px] bottom-[1px] text-[6px] font-bold leading-none text-[#e59a58]">360</span>
  </div>,
  <S w={28} h={24} v="0 0 28 24"><path d="M5 5c6-3 14-3 18-5l-1 11c-1 5-7 8-12 5C7 15 5 9 5 5z" fill="#6e6a5c" /><circle cx="10" cy="9" r="3" fill="#ddd" /><circle cx="16" cy="9" r="3" fill="#ddd" /><circle cx="10" cy="9" r="1" fill="#111" /><circle cx="16" cy="9" r="1" fill="#111" /><circle cx="2" cy="8" r="2" fill="#ccc" /><path d="M16 16l11 7" stroke="#b77f3c" strokeWidth="2" /></S>,
  <div className="w-[30px] h-[32px] bg-black flex items-center justify-center">
    <S w={20} h={21} v="0 0 20 21"><rect width="20" height="21" fill="#8a5a3a" /><rect width="20" height="6" fill="#5f9e3a" /><path d="M2 6v2M6 6v3M11 6v2M16 6v3M3 13h4M12 11h4M8 17h5" stroke="#5f3c24" strokeWidth="2" /></S>
  </div>,
  <S w={29} h={31} v="0 0 29 31"><path d="M0 4h16l6 5v19H1z" fill="#eef2e6" stroke="#aaa" /><path d="M1 14h21v14H1z" fill="#7cc142" /><circle cx="10" cy="15" r="5" stroke="#234" /><path d="M6 21h10" stroke="#234" /><path d="M21 14L28 0" stroke="#b8860b" strokeWidth="2" /></S>,
  <div className="w-[30px] h-[32px] bg-[#d3dbeb] border border-[#7f8aa5] flex flex-col items-center pt-[3px]">
    <div className="w-[24px] h-[19px] bg-white flex items-center justify-center text-[#1f3c78] text-[15px] font-bold leading-none">H2</div>
    <div className="w-[22px] h-[2px] mt-[3px] bg-[#57607a]" />
  </div>,
  <S w={30} h={32} v="0 0 30 32"><rect width="25" height="32" fill="#6ab9dc" /><rect width="25" height="4" fill="#3d8ea8" /><path d="M3 10l3 6M9 11l3 6M15 18l3 6M4 22l3 6M10 24l3 6" stroke="#1f4fa8" strokeWidth="1.500" /><path d="M9 12c6-2 11-5 13-8l6-3-1 12-4 6-3-6-7 4z" fill="#9aa5ae" /></S>,
  <S w={29} h={28} v="0 0 29 28"><rect x="0" y="0" width="24" height="24" rx="4" fill="#6478d0" /><path d="M5 9c4-2 9-2 13 0 1 3 1 6 0 8-4 1-9 1-13 0-1-2-1-5 0-8z" fill="#dfe4f8" /><circle cx="20.500" cy="19.500" r="8.500" fill="#ee4f55" /><circle cx="20.500" cy="19.500" r="4" fill="#fff" /></S>,
];

const Taskbar = () => (
  <div className="h-[50px] bg-[#0c0a0e] flex items-center shrink-0 relative">
    <div className="w-[60px] flex justify-center shrink-0">
      <S w={21} h={22} v="0 0 21 22"><path d="M0 3.500l8.500-1.300V10H0zM9.500 2l11.500-2v10H9.500zM0 11h8.500v8L0 17.800zM9.500 11H21v11l-11.500-2z" fill="#fff" /></S>
    </div>
    <div className="w-[430px] h-full bg-[#383838] flex items-center shrink-0 text-[#bcbcbc] text-[16.500px]">
      <div className="w-[28px] h-[28px] rounded-full border-[3px] border-[#e8e8e8] ml-[11px]" />
      <span className="ml-[11px] leading-none whitespace-nowrap">Type here to search</span>
      <S w={14} h={24} v="0 0 14 24" className="ml-[196px]"><rect x="3" y="0" width="8" height="16" rx="4" stroke="#aaa" strokeWidth="1.500" /><path d="M1 11c0 9 12 9 12 0M7 18v5" stroke="#aaa" strokeWidth="1.500" /></S>
    </div>
    <div className="flex h-full items-center shrink-0 ml-[1px]">
      {taskIcons.map((ic, i) => (
        <div key={i} className={"w-[62px] h-full flex items-center justify-center " + (i === 5 ? "bg-[#3b3b3b]" : "")}>{ic}</div>
      ))}
    </div>
    <div className="flex items-center text-white ml-[33px]">
      <S w={20} h={22} v="0 0 20 22"><circle cx="13" cy="5" r="3.500" stroke="#eee" strokeWidth="1.500" /><circle cx="7" cy="11" r="3.500" stroke="#eee" strokeWidth="1.500" /><path d="M1 21c1-5 3-6 6-6s5 2 6 6M14 10c3 0 5 2 6 6" stroke="#eee" strokeWidth="1.500" /></S>
      <S w={16} h={10} v="0 0 16 10" className="ml-[27px]"><path d="M1 9l7-8 7 8" stroke="#eee" strokeWidth="1.500" /></S>
      <S w={18} h={20} v="0 0 18 20" className="ml-[14px]"><path d="M1 19C1 9 8 2 17 1M5 19c0-7 5-12 12-13M9 19c0-4 3-8 8-8" stroke="#ccc" strokeWidth="1.300" /><rect x="13" y="15" width="4" height="4" fill="#eee" /></S>
      <S w={19} h={12} v="0 0 19 12" className="ml-[11px]"><rect x="1" y="1" width="15" height="10" stroke="#eee" strokeWidth="1.500" /><rect x="3" y="3" width="7" height="6" fill="#eee" /><rect x="17" y="4" width="2" height="4" fill="#eee" /></S>
      <div className="w-[75px] ml-[9px] text-center text-[14px] leading-[23px] text-[#e8e8e8] whitespace-nowrap">
        <div>5:09 PM</div>
        <div>7/31/2019</div>
      </div>
      <S w={20} h={22} v="0 0 20 22" className="ml-[19px]"><path d="M1 1h18v16h-6l-3 4-3-4H1z" fill="#fff" /><path d="M4 6h12M4 10h12M4 14h7" stroke="#111" /></S>
    </div>
    {/* running app underlines */}
    <div className="absolute left-[802px] bottom-0 w-[61px] h-[3px] bg-[#b5b5ad]" />
    <div className="absolute left-[869px] bottom-0 w-[51px] h-[3px] bg-[#b5b5ad]" />
    <div className="absolute left-[1365px] bottom-0 w-[51px] h-[3px] bg-[#b5b5ad]" />
    <div className="absolute left-[1427px] bottom-0 w-[40px] h-[3px] bg-[#b5b5ad]" />
    <div className="absolute left-[1467px] bottom-0 w-[11px] h-[3px] bg-[#808080]" />
    <div className="absolute left-[1489px] bottom-0 w-[51px] h-[3px] bg-[#b5b5ad]" />
    <div className="absolute left-[1551px] bottom-0 w-[51px] h-[3px] bg-[#b5b5ad]" />
  </div>
);

export default function App() {
  return (
    <div className="w-[1920px] h-[1080px] overflow-hidden flex flex-col font-['Noto_Sans',sans-serif] text-[14px]">
      {/* title bar */}
      <div className="h-[32px] shrink-0 flex items-center pb-[5px] pl-[5px] text-[14px] text-[#d6d6d6] bg-[#4f4f4f] bg-[repeating-linear-gradient(135deg,#4e4e4e_0px,#4e4e4e_2px,#545454_2px,#545454_4px)]">
        <AppIcon />
        <div className="ml-[18px]"><NewDoc /></div>
        <div className="ml-[10px]"><Dd /></div>
        <div className="ml-[9px]"><OpenIco /></div>
        <div className="ml-[11px]"><SaveIco /></div>
        <div className="ml-[10px]"><Undo /></div>
        <div className="ml-[9px]"><Dd /></div>
        <div className="ml-[11px]"><Undo flip c="#7a7a7a" /></div>
        <div className="ml-[9px]"><Dd c="#8a8a8a" /></div>
        <div className="ml-[11px]"><Home /></div>
        <div className="ml-[12px]"><PrintIco /></div>
        <div className="ml-[9px]"><DotIco /></div>
        <div className="ml-[8px]"><Dd /></div>
        <div className="ml-[10px]"><GrayA /></div>
        <div className="ml-[10px]"><GrayB /></div>
        <div className="ml-[10px]"><GreenDoc /></div>
        <div className="ml-[7px]"><Dd /></div>
        <div className="ml-[11px]"><PlusGray /></div>
        <div className="ml-[11px]"><QatMenu /></div>
        <span className="ml-[264px] w-[240px] mt-[2px] whitespace-nowrap">Autodesk Inventor Professional 2019</span>
        <span className="ml-[16px] w-[64px] mt-[2px]">Drawing2</span>
        <S w={5} h={10} v="0 0 5 10" className="ml-[264px]"><path d="M0 0l5 5-5 5z" fill="#ddd" /></S>
        <div className="ml-[7px] w-[225px] h-[25px] self-start bg-[#8f8f8f] text-[#d8d8d8] flex items-center pl-[6px] whitespace-nowrap">Search Help &amp; Commands...</div>
        <div className="ml-[4px]"><UserIco /></div>
        <span className="ml-[7px] w-[87px]">fgportman00</span>
        <div className="ml-[19px]"><Dd /></div>
        <div className="ml-[12px]"><Cart /></div>
        <div className="ml-[12px] w-px h-[24px] bg-[#777]" />
        <div className="ml-[11px]"><Help /></div>
        <div className="ml-[8px]"><Dd /></div>
        <S w={10} h={4} v="0 0 10 4" className="ml-[35px] mt-[12px]"><rect width="10" height="3" fill="#ddd" /></S>
        <S w={14} h={14} v="0 0 14 14" className="ml-[18px]"><rect x="4" y="1" width="9" height="9" stroke="#ddd" strokeWidth="1.500" /><rect x="1" y="4" width="9" height="9" fill="#4f4f4f" stroke="#ddd" strokeWidth="1.500" /></S>
        <S w={13} h={13} v="0 0 13 13" className="ml-[19px]"><path d="M1 1l11 11M12 1L1 12" stroke="#ddd" strokeWidth="1.500" /></S>
      </div>

      {/* ribbon tabs */}
      <div className="h-[26px] shrink-0 flex bg-[#4f4f4f] border-b border-[#94fc83] text-[#d2d2d2]">
        <div className="w-[54px] bg-[#f18528] text-white flex items-center justify-center">File</div>
        {tabs.map(([label, w]) => (
          <div key={label} className={w + " flex items-center justify-center " + (label === "Sketch" ? "bg-[#94fc83] text-[#3c3c3c]" : "")}>{label}</div>
        ))}
        <div className="ml-[27px] flex items-center gap-[6px]">
          <div className="w-[16px] h-[9px] rounded-[2px] bg-[#e8e8e8] flex items-center justify-center"><Dd c="#444" /></div>
          <Dd />
        </div>
      </div>

      <Ribbon />

      {/* main area */}
      <div className="flex-1 flex min-h-0 bg-white">
        <Browser />
        <div className="flex-1 flex flex-col min-w-0 border-l-[3px] border-[#5f5f5f]">
          <Canvas />
          <DocBar />
        </div>
      </div>

      <StatusBar />
      <Taskbar />
    </div>
  );
}
